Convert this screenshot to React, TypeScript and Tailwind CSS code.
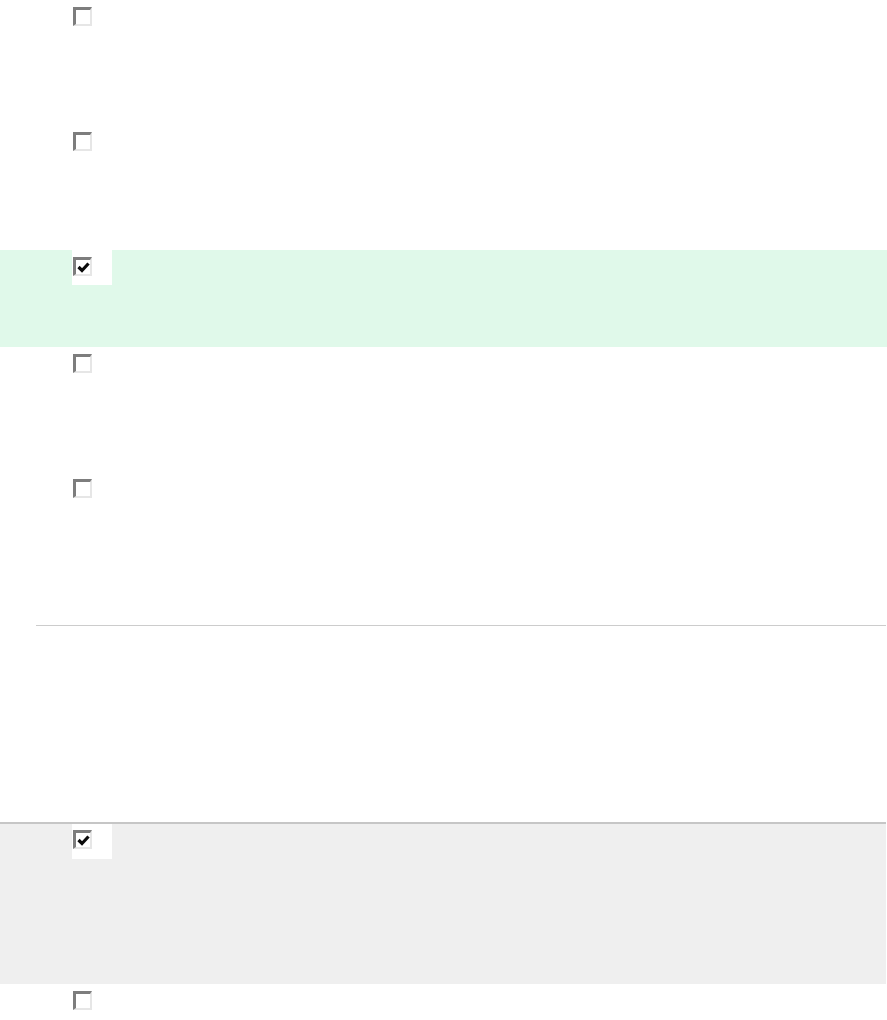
import React from "react";

type Row = { checked: boolean; height: string; tone?: "green" | "gray" };

const top: Row[] = [
  { checked: false, height: "h-[125px]" },
  { checked: false, height: "h-[125px]" },
  { checked: true, height: "h-[97px]", tone: "green" },
  { checked: false, height: "h-[125px]" },
  { checked: false, height: "h-[125px]" },
];

/** Old-style inset checkbox. */
function Box({ checked }: { checked: boolean }) {
  return (
    <span className="flex h-[19px] w-[19px] items-center justify-center border-t-[3px] border-l-[3px] border-r-2 border-b-2 border-t-[#7d7d7d] border-l-[#7d7d7d] border-r-[#e6e6e6] border-b-[#e6e6e6] bg-white">
      {checked && (
        <svg width="13" height="12" viewBox="0 0 13 12">
          <path d="M1.5 6 L5 9.5 L11.5 2.5" fill="none" stroke="#0a0a0a" strokeWidth="3.2" />
        </svg>
      )}
    </span>
  );
}

function ItemRow({ row }: { row: Row }) {
  const bg = row.tone === "green" ? "bg-[#e0f9ea]" : "";
  return (
    <div className={`flex pl-[72px] ${row.height} ${bg}`}>
      <div className="h-[35px] w-[40px] bg-white pl-px pt-[7px]">
        <Box checked={row.checked} />
      </div>
    </div>
  );
}

export default function App() {
  return (
    <div className="min-h-[1020px] bg-white" style={{ fontFamily: "'Liberation Sans', Arial, sans-serif" }}>
      {top.map((r, i) => (
        <ItemRow key={i} row={r} />
      ))}
      <div className="mt-[28px] ml-[36px] mr-px h-px bg-[#cccccc]" />
      <div className="h-[196px]" />
      <div className="mr-px h-[162px] border-t-2 border-[#c6c6c6] bg-[#efefef]">
        <div className="flex pl-[72px]">
          <div className="h-[35px] w-[40px] bg-white pl-px pt-[6px]">
            <Box checked />
          </div>
        </div>
      </div>
      <ItemRow row={{ checked: false, height: "h-[36px]" }} />
    </div>
  );
}
